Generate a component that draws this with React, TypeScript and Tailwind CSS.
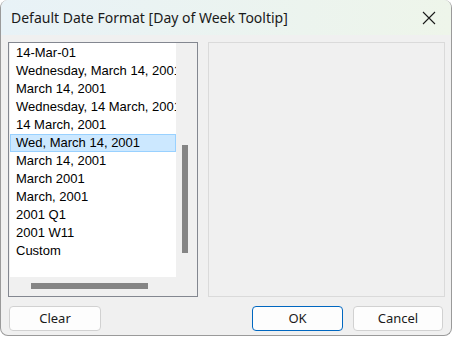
import React from 'react';

const FORMATS = [
  '14-Mar-01',
  'Wednesday, March 14, 2001',
  'March 14, 2001',
  'Wednesday, 14 March, 2001',
  '14 March, 2001',
  'Wed, March 14, 2001',
  'March 14, 2001',
  'March 2001',
  'March, 2001',
  '2001 Q1',
  '2001 W11',
  'Custom',
];

const SELECTED = 5;

const Button: React.FC<{ label: string; primary?: boolean; className?: string }> = ({ label, primary, className }) => (
  <button
    className={
      'h-[25px] rounded-[4px] bg-[#fdfdfd] text-[13px] text-[#1a1a1a] border ' +
      (primary ? 'border-[#0067c0] ' : 'border-[#d1d1d1] ') +
      (className ?? '')
    }
  >
    {label}
  </button>
);

export default function App() {
  return (
    <div className="w-[452px] h-[342px] bg-white font-['Noto_Sans',sans-serif]">
      <div className="w-[452px] h-[336px] flex flex-col bg-[#f0f0f0] border-x border-b border-[#9a9a9a] rounded-b-[8px] rounded-t-[8px] overflow-hidden">
        {/* title bar */}
        <div className="h-[35px] shrink-0 flex items-center justify-between pl-[10px] pr-[14px] bg-gradient-to-r from-[#e8f2f7] to-[#eef5ea]">
          <span className="text-[14px] text-[#1a1a1a] leading-none">Default Date Format [Day of Week Tooltip]</span>
          <svg width="14" height="14" viewBox="0 0 14 14" className="mr-[1px]">
            <path d="M1 1L13 13M13 1L1 13" stroke="#1a1a1a" strokeWidth="1.1" fill="none" />
          </svg>
        </div>

        <div className="flex gap-[10px] pl-[7px] pr-[6px] pt-[7px]">
          {/* list box */}
          <div className="w-[190px] h-[255px] border border-[#838790] bg-[#f0f0f0] grid grid-cols-[167px_21px] grid-rows-[234px_19px]">
            <div className="bg-white ml-[1px] overflow-hidden pt-[1px] font-['Liberation_Sans',sans-serif] text-[13px] text-black">
              {FORMATS.map((f, i) => (
                <div
                  key={i}
                  className={
                    'h-[18px] pl-[5px] flex items-center whitespace-nowrap border ' +
                    (i === SELECTED ? 'bg-[#cce8ff] border-[#99d1ff]' : 'border-transparent')
                  }
                >
                  {f}
                </div>
              ))}
            </div>
            <div className="pt-[102px] pl-[6px]">
              <div className="w-[6px] h-[108px] bg-[#858585]" />
            </div>
            <div className="pt-[6px] pl-[22px]">
              <div className="w-[117px] h-[6px] bg-[#858585]" />
            </div>
            <div />
          </div>

          {/* preview panel */}
          <div className="w-[237px] h-[255px] border border-[#dadada]" />
        </div>

        <div className="flex items-center pl-[8px] pr-[8px] pt-[9px]">
          <Button label="Clear" className="w-[92px]" />
          <div className="flex-1" />
          <Button label="OK" primary className="w-[91px] mr-[10px]" />
          <Button label="Cancel" className="w-[90px]" />
        </div>
      </div>
    </div>
  );
}
